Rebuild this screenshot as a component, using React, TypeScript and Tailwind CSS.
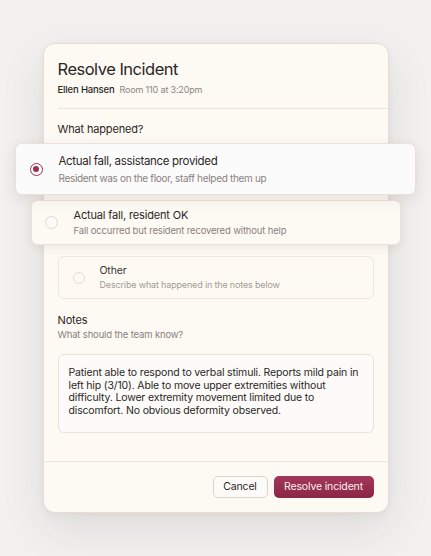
import React from 'react';

type Option = {
  title: string;
  desc: string;
};

const options: Option[] = [
  { title: 'Actual fall, assistance provided', desc: 'Resident was on the floor, staff helped them up' },
  { title: 'Actual fall, resident OK', desc: 'Fall occurred but resident recovered without help' },
  { title: 'Other', desc: 'Describe what happened in the notes below' },
];

const App: React.FC = () => {
  return (
    <div
      className="h-[556px] w-full overflow-hidden bg-[#f2f1ef] flex justify-center pt-[43px] text-[#2b2725] tracking-[-0.01em]"
      style={{ fontFamily: 'Inter, "Noto Sans", sans-serif' }}
    >
      <div className="w-[346px] h-[470px] rounded-[12px] border border-[#e7ddd6] bg-[#fdfaf4] shadow-[0_16px_44px_rgba(60,40,30,0.10),0_2px_6px_rgba(60,40,30,0.05)] flex flex-col">
        {/* header */}
        <div className="px-[14px] pt-[15px]">
          <h1 className="text-[16.5px] leading-[21px] font-normal tracking-[-0.03em]">Resolve Incident</h1>
          <div className="mt-[3px] text-[9.5px] leading-[13px] flex items-baseline gap-[5px]">
            <span className="font-medium text-[#2b2725]">Ellen Hansen</span>
            <span className="text-[9px] text-[#8d8480]">Room 110 at 3:20pm</span>
          </div>
        </div>
        <div className="ml-[14px] mt-[12px] h-px bg-[#ece4dd]" />

        <div className="px-[14px]">
          <p className="mt-[13px] text-[11px] leading-[14px]">What happened?</p>

          {/* option 1 - lifted */}
          <div className="relative z-20 mt-[7px] -ml-[43px] -mr-[42px] h-[52px] rounded-[7px] border border-[#ebdfda] bg-[#fbfbfc] shadow-[0_4px_14px_rgba(60,40,30,0.10)] flex items-center pl-[14px]">
            <div className="w-[13px] h-[13px] rounded-full border-[1.5px] border-[#9b3151] flex items-center justify-center shrink-0">
              <div className="w-[6.5px] h-[6.5px] rounded-full bg-[#9b3151]" />
            </div>
            <div className="ml-[16px] flex flex-col tracking-[-0.02em]">
              <span className="text-[11.5px] leading-[16px]">{options[0].title}</span>
              <span className="mt-[2px] text-[10px] leading-[14px] text-[#8a817d]">{options[0].desc}</span>
            </div>
          </div>

          {/* option 2 - lifted */}
          <div className="relative z-10 mt-[5px] -ml-[27px] -mr-[27px] h-[45px] rounded-[6px] border border-[#ebe0da] bg-[#fdfaf4] shadow-[0_3px_10px_rgba(60,40,30,0.08)] flex items-center pl-[13px]">
            <div className="w-[13px] h-[13px] rounded-full border border-[#e3d6d0] bg-[#fdfbf8] shrink-0" />
            <div className="ml-[16px] flex flex-col">
              <span className="text-[11px] leading-[14px]">{options[1].title}</span>
              <span className="mt-[2px] text-[9.5px] leading-[13px] text-[#8a817d]">{options[1].desc}</span>
            </div>
          </div>

          {/* option 3 */}
          <div className="mt-[11px] h-[43px] rounded-[6px] border border-[#efe6e0] bg-[#fdfaf4] flex items-center pl-[14px]">
            <div className="w-[12px] h-[12px] rounded-full border border-[#e6dbd5] shrink-0" />
            <div className="ml-[15px] flex flex-col">
              <span className="text-[10.5px] leading-[14px] text-[#3a3532]">{options[2].title}</span>
              <span className="mt-[1px] text-[9px] leading-[12px] text-[#a39a95]">{options[2].desc}</span>
            </div>
          </div>

          {/* notes */}
          <p className="mt-[14px] text-[11px] leading-[14px]">Notes</p>
          <p className="mt-[2px] text-[9.5px] leading-[12px] text-[#8a817d]">What should the team know?</p>
          <div className="mt-[13px] h-[79px] rounded-[6px] border border-[#ebe2db] bg-[#fcfbf9] px-[10px] pt-[12px] text-[10.5px] leading-[12.5px] text-[#2b2725]">
            Patient able to respond to verbal stimuli. Reports mild pain in left hip (3/10). Able to move upper extremities without difficulty. Lower extremity movement limited due to discomfort. No obvious deformity observed.
          </div>
        </div>

        {/* footer */}
        <div className="mt-[28px] h-px bg-[#ece4dd]" />
        <div className="px-[14px] pt-[14px] flex justify-end gap-[6px]">
          <button className="h-[22px] w-[55px] rounded-[5px] border border-[#dcd3cd] bg-[#fdfbf7] text-[10.5px] text-[#2b2725]">
            Cancel
          </button>
          <button className="h-[22px] w-[100px] rounded-[5px] bg-gradient-to-b from-[#a2385a] to-[#8c2646] text-[10.5px] text-[#fbeef2]">
            Resolve incident
          </button>
        </div>
      </div>
    </div>
  );
};

export default App;
